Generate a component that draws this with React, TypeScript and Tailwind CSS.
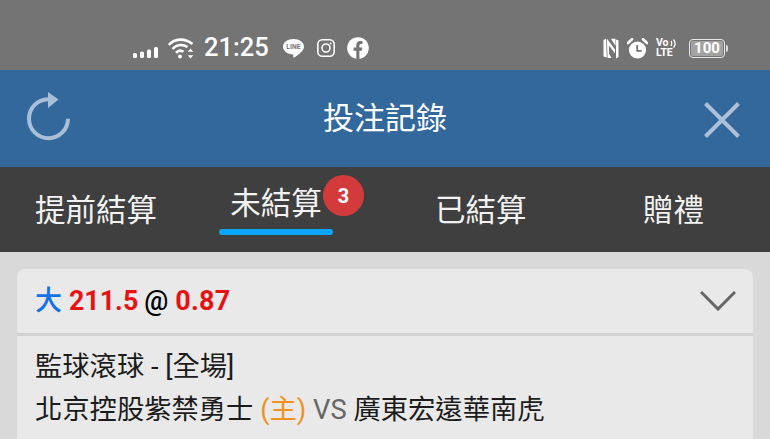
import React from "react";

const cjk = { fontFamily: "Roboto, 'Noto Sans CJK TC', sans-serif" };

function Signal() {
  return (
    <svg width="26" height="11" viewBox="0 0 26 11" fill="white" className="ml-[133px] mt-[9px]">
      <rect x="0" y="6" width="4" height="5" rx="1.5" />
      <rect x="7" y="4.5" width="4" height="6.5" rx="1.5" />
      <rect x="14" y="2.5" width="4" height="8.5" rx="1.5" />
      <rect x="21" y="0" width="4" height="11" rx="1.5" />
    </svg>
  );
}

function Wifi() {
  return (
    <svg width="26" height="21" viewBox="0 0 26 21" fill="none" stroke="white" strokeWidth="2.6" className="ml-[9px]">
      <path d="M0.8 7 C7 0 17 0 24.5 6" />
      <path d="M4.5 11 C9 6 15 6 19.5 9" />
      <path d="M8 14.8 C10.5 12 13 12 15.5 13.8" />
      <circle cx="12" cy="18.5" r="2" fill="white" stroke="none" />
      <path d="M22.5 10.5 l-2.8 3.2 h5.6 z M22.5 20.5 l-2.8 -3.2 h5.6 z" fill="white" stroke="none" />
    </svg>
  );
}

function LineIcon() {
  return (
    <svg width="21" height="19" viewBox="0 0 21 19" className="ml-[15px]">
      <path d="M10.5 0 C16.3 0 21 3.3 21 7.7 C21 11.8 14.8 16.3 11 18.6 C10.2 19 10.2 17.4 10.3 15.4 C4.7 15.4 0 12 0 7.7 C0 3.3 4.7 0 10.5 0 Z" fill="white" />
      <text x="10.5" y="10.2" textAnchor="middle" fontSize="6.8" fontWeight="700" fill="#747474" fontFamily="Roboto, sans-serif">LINE</text>
    </svg>
  );
}

function Insta() {
  return (
    <svg width="18" height="18" viewBox="0 0 18 18" fill="none" stroke="white" strokeWidth="1.6" className="ml-[13px]">
      <rect x="0.8" y="0.8" width="16.4" height="16.4" rx="4.5" />
      <circle cx="9" cy="9" r="4" />
      <circle cx="13.6" cy="4.4" r="1" fill="white" stroke="none" />
    </svg>
  );
}

function Fb() {
  return (
    <svg width="22" height="22" viewBox="0 0 22 22" className="ml-[12px]">
      <circle cx="11" cy="11" r="10.8" fill="white" />
      <path d="M9.3 22 V13.8 H6.6 V10.6 H9.3 V8.3 C9.3 5.6 11 4.1 13.3 4.1 C14.4 4.1 15.4 4.3 15.4 4.3 V7 H14.1 C12.8 7 12.4 7.8 12.4 8.6 V10.6 H15.3 L14.8 13.8 H12.4 V22 Z" fill="#747474" />
    </svg>
  );
}

function NfcIcon() {
  return (
    <svg width="16" height="21" viewBox="0 0 16 21" fill="white">
      <path d="M0.5 2 L3 0.5 L3.8 19.5 L0.5 18.5 Z" />
      <path d="M3.8 0.5 L12 11.5 V15.5 L6 7.5 V15.5 L8.5 20 L4.6 20 Z" />
      <path d="M8 0.8 L12.5 0.8 V8 Z" />
      <path d="M13 1.5 L15.5 2.5 V19 L13 20.5 Z" />
    </svg>
  );
}

function Alarm() {
  return (
    <svg width="21" height="21" viewBox="0 0 21 21" className="ml-[8px]">
      <circle cx="10.5" cy="12" r="8.6" fill="white" />
      <path d="M1 5 L5 1.2 M20 5 L16 1.2" stroke="white" strokeWidth="2.6" strokeLinecap="round" />
      <path d="M10.2 7 V12.8 H14.6" stroke="#747474" strokeWidth="1.8" fill="none" />
    </svg>
  );
}

function Volte() {
  return (
    <div className="ml-[8px] w-[20px] text-white relative" style={cjk}>
      <div className="text-[10.5px] leading-[10px] font-bold tracking-[-0.1px]">
        Vo
        <br />
        LTE
      </div>
      <svg width="7" height="10" viewBox="0 0 7 10" className="absolute right-[-1px] top-0" fill="none" stroke="white" strokeWidth="1.3">
        <path d="M1 3 C2 4.5 2 6 1 8 M3.5 1.5 C5.5 4 5.5 7 3.5 9.5" />
      </svg>
    </div>
  );
}

function Battery() {
  return (
    <div className="ml-[13px] flex items-center">
      <div className="w-[36px] h-[19px] rounded-[4px] border-[1.5px] border-[#e8e8e8] p-[1px] flex">
        <div className="flex-1 rounded-[2px] bg-[#a3a3a3] flex items-center justify-center text-white font-bold text-[15px] leading-none whitespace-nowrap" style={cjk}>100</div>
      </div>
      <div className="w-[2px] h-[7px] bg-[#d8d8d8] rounded-r-sm ml-[1px]" />
    </div>
  );
}

export default function App() {
  return (
    <div className="w-[770px] h-[439px] overflow-hidden bg-[#d9d9d9]" style={cjk}>
      <div className="h-[70px] bg-[#747474] flex items-center pt-[26px]">
        <Signal />
        <Wifi />
        <span className="ml-[10px] text-white text-[25.5px] font-medium leading-none w-[64px] whitespace-nowrap">21:25</span>
        <LineIcon />
        <Insta />
        <Fb />
        <div className="ml-[234px] flex items-center">
          <NfcIcon />
          <Alarm />
          <Volte />
          <Battery />
        </div>
      </div>

      <div className="h-[97px] bg-[#33689c] flex items-center justify-between pl-[26px] pr-[30px] relative">
        <svg width="46" height="50" viewBox="0 0 46 50" fill="none" className="mt-[-3px]">
          <path d="M22 7.2 A19.5 19.5 0 1 0 42 26.7" stroke="#a9bfd8" strokeWidth="4" />
          <path d="M22 0 L32.5 7.5 L22 16 Z" fill="#a9bfd8" />
        </svg>
        <span className="text-white text-[31px] leading-none absolute left-[323px] whitespace-nowrap">投注記錄</span>
        <svg width="36" height="36" viewBox="0 0 36 36" fill="none" stroke="#adc0d8" strokeWidth="4" className="mt-[2px]">
          <path d="M1.5 1.5 L34.5 34.5 M34.5 1.5 L1.5 34.5" />
        </svg>
      </div>

      <div className="h-[85px] bg-[#3f3f3f] flex text-[#f2f2f2] text-[30.5px] leading-none pl-[35px] whitespace-nowrap">
        <div className="w-[122px] mt-[29px]">提前結算</div>
        <div className="ml-[62px] w-[114px] mt-[22px] flex flex-col items-center relative">
          <span>未結算</span>
          <div className="mt-[9px] h-[6px] w-full rounded-full bg-[#0aa5f5]" />
          <div className="absolute left-[104px] top-[-14px] w-[41px] h-[41px] rounded-full bg-[#d33a3c] flex items-center justify-center text-white text-[20px] font-bold">3</div>
        </div>
        <div className="ml-[102px] w-[92px] mt-[29px]">已結算</div>
        <div className="ml-[116px] mt-[29px]">贈禮</div>
      </div>

      <div className="mx-[17px] mt-[17px] bg-[#e9e9e9] rounded-t-[8px] h-[170px]">
        <div className="h-[64px] flex items-center justify-between pl-[18px] pr-[17px] font-medium border-b-[3px] border-[#d2d2d2] box-content">
          <div className="flex items-center leading-none gap-[6px]">
            <span className="text-[#1272e6] text-[27px] mr-[1px]">大</span>
            <span className="text-[#e51313] font-bold text-[26.8px]">211.5</span>
            <span className="text-black text-[26.8px]">@</span>
            <span className="text-[#e51313] font-bold text-[27px] ml-[1px] tracking-[0.2px]">0.87</span>
          </div>
          <svg width="36" height="20" viewBox="0 0 36 20" fill="none" stroke="#666666" strokeWidth="3">
            <path d="M1 1 L18 18 L35 1" />
          </svg>
        </div>
        <div className="pl-[18px] pt-[10px] text-[#1c1c1c] text-[27.3px] leading-[43px] whitespace-nowrap">
          <div>監球滾球 - [全場]</div>
          <div>
            北京控股紫禁勇士 <span className="text-[#ee9220]">(主)</span> <span className="text-[#666666]">VS</span> 廣東宏遠華南虎
          </div>
        </div>
      </div>
    </div>
  );
}
